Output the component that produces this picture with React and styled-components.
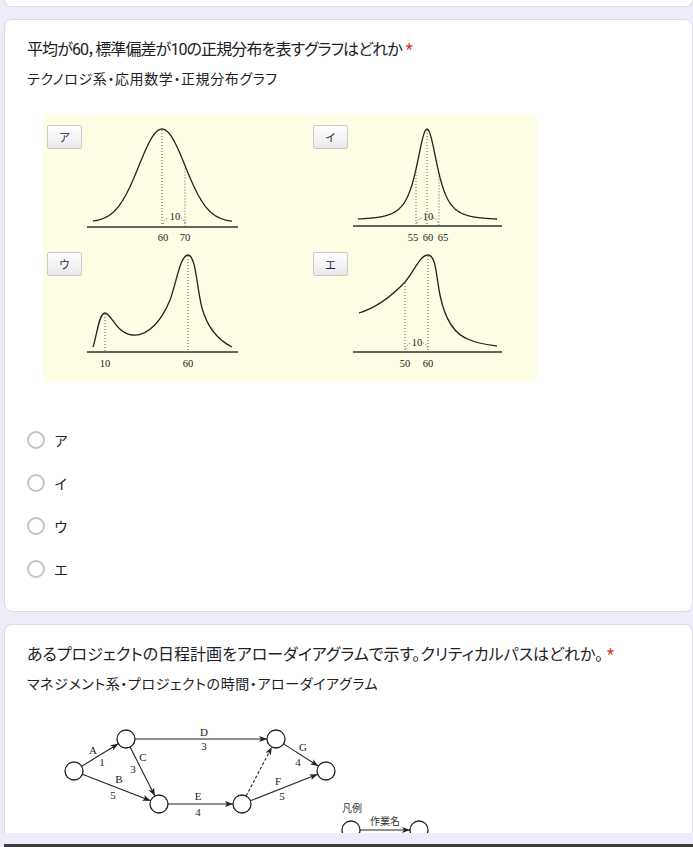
import React from 'react'
import styled, { createGlobalStyle } from 'styled-components'

const GlobalStyle = createGlobalStyle`
  html, body {
    margin: 0;
    padding: 0;
    background: #f0ebf8;
  }
  body {
    font-family: Roboto, "Noto Sans CJK JP", sans-serif;
    color: #202124;
  }
`

const Page = styled.div`
  height: 847px;
  overflow: hidden;
  display: flex;
  flex-direction: column;
  padding-left: 4px;
`

const Card = styled.section`
  flex: none;
  width: 689px;
  box-sizing: border-box;
  background: #fff;
  border: 1px solid #dadce0;
  border-radius: 8px;
  margin-top: ${({ $gap }) => $gap || 0}px;
  padding: 18px 22px 21px;
`

const StubCard = styled(Card)`
  height: 7px;
  padding: 0;
  border-top: none;
  border-radius: 0 0 8px 8px;
`

const ClippedCard = styled(Card)`
  height: 209px;
  padding-bottom: 0;
  border-bottom: none;
  border-radius: 8px 8px 0 0;
  overflow: hidden;
`

const Footer = styled.div`
  flex: none;
  height: 11px;
  border-bottom: 3px solid #3c3c3c;
`

const Title = styled.h2`
  margin: 0;
  font-size: 16px;
  line-height: 24px;
  font-weight: 400;
  font-feature-settings: 'palt';
  letter-spacing: ${({ $spacing }) => $spacing || 0}px;
`

const Required = styled.span`
  color: #d93025;
  margin-left: 4px;
`

const Description = styled.p`
  margin: 7px 0 0;
  font-size: 14px;
  line-height: 20px;
  font-feature-settings: 'palt';
  letter-spacing: 0.6px;
`

const Figure = styled.div`
  position: relative;
  margin: 26px 0 0 16px;
  width: ${({ $w }) => $w}px;
  height: ${({ $h }) => $h}px;
  background: ${({ $bg }) => $bg || 'transparent'};

  svg {
    display: block;
  }
`

const ChoiceTag = styled.span`
  position: absolute;
  left: ${({ $x }) => $x}px;
  top: ${({ $y }) => $y}px;
  width: 35px;
  height: 24px;
  box-sizing: border-box;
  display: flex;
  align-items: center;
  justify-content: center;
  border: 1px solid #cacaca;
  border-radius: 2px;
  background: linear-gradient(#ffffff, #e9e9e9);
  font-size: 11px;
  color: #1f2a44;
`

const Options = styled.ul`
  list-style: none;
  margin: 37px 0 0;
  padding: 0;
`

const Option = styled.li`
  height: 43px;
  display: flex;
  align-items: center;
  gap: 9px;
  font-size: 14px;
`

const Radio = styled.span`
  width: 18px;
  height: 18px;
  box-sizing: border-box;
  border: 2px solid #c4c4c4;
  border-radius: 50%;
`

const line = (from, to, fn) => {
  const pts = []
  for (let x = from; x <= to; x += 1) pts.push(`${x},${fn(x).toFixed(1)}`)
  return 'M' + pts.join(' L')
}

const gauss = (m, s, base, h) => x =>
  base - h * Math.exp(-((x - m) ** 2) / (2 * s * s))

const peaked = (m, g, base, h) => x =>
  base - h / Math.pow(1 + ((x - m) / g) ** 2, 1.5)

const curveA = gauss(162, 23, 222, 93)
const curveI = peaked(427, 16, 220, 91)

const ink = '#222'
const dot = { stroke: '#555', strokeWidth: 1, strokeDasharray: '1 2', fill: 'none' }
const serif = { fontFamily: '"Liberation Serif", serif', fontSize: 10.5, fill: '#222', textAnchor: 'middle' }

function Label({ x, y, children, size }) {
  return (
    <text x={x} y={y} style={{ ...serif, fontSize: size || 10.5 }}>
      {children}
    </text>
  )
}

function DistributionCharts() {
  return (
    <svg width="494" height="266" viewBox="43 115 494 266">
      <g fill="none" stroke={ink}>
        <path d={line(93, 232, curveA)} strokeWidth="1.3" />
        <path d={line(358, 497, curveI)} strokeWidth="1.3" />
        <path
          d="M93,347 C97,335 99,313 105,313 C111,313 116,333 132,335 C148,337 162,320 170,300 C176,285 180,255 188,255 C196,255 197,290 202,308 C207,326 218,340 232,347"
          strokeWidth="1.3"
        />
        <path
          d="M359,313 C375,308 390,298 405,282 C415,270 420,255 428,255 C436,255 436,275 440,295 C445,320 455,335 470,340 C480,344 490,345 497,346"
          strokeWidth="1.3"
        />
        <g stroke="#333" strokeWidth="1.6">
          <line x1="87" y1="227" x2="238" y2="227" />
          <line x1="353" y1="226" x2="502" y2="226" />
          <line x1="87" y1="352" x2="238" y2="352" />
          <line x1="353" y1="352" x2="502" y2="352" />
        </g>
      </g>

      <g style={dot}>
        <line x1="162" y1="130" x2="162" y2="227" />
        <line x1="185" y1={curveA(185)} x2="185" y2="227" />
        <path d="M163,224 Q164,219 168,218 M181,218 Q184,219 185,224" />

        <line x1="427" y1="130" x2="427" y2="226" />
        <line x1="416" y1={curveI(416)} x2="416" y2="226" />
        <line x1="439" y1={curveI(439)} x2="439" y2="226" />
        <path d="M417,223 Q418,219 422,218 M433,218 Q437,219 438,223" />

        <line x1="105" y1="314" x2="105" y2="352" />
        <line x1="188" y1="256" x2="188" y2="352" />

        <line x1="405" y1="283" x2="405" y2="352" />
        <line x1="428" y1="256" x2="428" y2="352" />
        <path d="M406,349 Q407,344 411,343 M423,343 Q427,344 428,349" />
      </g>

      <Label x="175" y="219.5">10</Label>
      <Label x="163" y="240.5">60</Label>
      <Label x="185" y="240.5">70</Label>

      <Label x="428" y="219.5">10</Label>
      <Label x="413" y="240.5">55</Label>
      <Label x="428" y="240.5">60</Label>
      <Label x="443" y="240.5">65</Label>

      <Label x="105" y="366.5">10</Label>
      <Label x="188" y="366.5">60</Label>

      <Label x="417" y="345.5">10</Label>
      <Label x="405" y="366.5">50</Label>
      <Label x="428" y="366.5">60</Label>
    </svg>
  )
}

const nodes = {
  n1: [74, 771],
  n2: [126, 739],
  n3: [159, 804],
  n4: [242, 804],
  n5: [276, 739],
  n6: [326, 771],
  l1: [351, 830],
  l2: [419, 830],
}

const edges = [
  ['n1', 'n2'],
  ['n2', 'n3'],
  ['n1', 'n3'],
  ['n2', 'n5'],
  ['n3', 'n4'],
  ['n4', 'n5', true],
  ['n4', 'n6'],
  ['n5', 'n6'],
  ['l1', 'l2'],
]

const edgeLabels = [
  ['A', 93, 754],
  ['1', 102, 766],
  ['C', 143, 761],
  ['3', 133, 773],
  ['B', 119, 783],
  ['5', 113, 799],
  ['D', 204, 736],
  ['3', 204, 750],
  ['E', 198, 800],
  ['4', 198, 816],
  ['F', 278, 785],
  ['5', 282, 800],
  ['G', 303, 751],
  ['4', 298, 766],
]

const R = 9

function ArrowDiagram() {
  return (
    <svg width="420" height="130" viewBox="43 720 420 130">
      <defs>
        <marker
          id="head"
          viewBox="0 0 8 8"
          refX="8"
          refY="4"
          markerWidth="8"
          markerHeight="8"
          markerUnits="userSpaceOnUse"
          orient="auto"
        >
          <path d="M0,1 L8,4 L0,7 L2,4 Z" fill={ink} />
        </marker>
      </defs>

      {edges.map(([a, b, dashed]) => {
        const [x1, y1] = nodes[a]
        const [x2, y2] = nodes[b]
        const len = Math.hypot(x2 - x1, y2 - y1)
        const ux = (x2 - x1) / len
        const uy = (y2 - y1) / len
        return (
          <line
            key={a + b}
            x1={x1 + ux * R}
            y1={y1 + uy * R}
            x2={x2 - ux * R}
            y2={y2 - uy * R}
            stroke={ink}
            strokeWidth="1.1"
            strokeDasharray={dashed ? '3 2' : undefined}
            markerEnd="url(#head)"
          />
        )
      })}

      {Object.entries(nodes).map(([k, [x, y]]) => (
        <circle key={k} cx={x} cy={y} r={R} fill="#fff" stroke={ink} strokeWidth="1.3" />
      ))}

      {edgeLabels.map(([t, x, y], i) => (
        <Label key={i} x={x} y={y} size={11}>
          {t}
        </Label>
      ))}

      <text x="342" y="812" fontSize="10" fill="#333" fontFamily='"Noto Sans CJK JP", sans-serif'>
        凡例
      </text>
      <text x="385" y="825" fontSize="10" fill="#333" textAnchor="middle" fontFamily='"Noto Sans CJK JP", sans-serif'>
        作業名
      </text>
    </svg>
  )
}

const tags = [
  ['ア', 4, 10],
  ['イ', 270, 10],
  ['ウ', 4, 137],
  ['エ', 270, 137],
]

const choices = ['ア', 'イ', 'ウ', 'エ']

export default function App() {
  return (
    <>
      <GlobalStyle />
      <Page>
        <StubCard />

        <Card $gap={12}>
          <Title $spacing={-0.9}>
            平均が60，標準偏差が10の正規分布を表すグラフはどれか
            <Required>*</Required>
          </Title>
          <Description>テクノロジ系・応用数学・正規分布グラフ</Description>

          <Figure $w={494} $h={266} $bg="#fefee6">
            <DistributionCharts />
            {tags.map(([t, x, y]) => (
              <ChoiceTag key={t} $x={x} $y={y}>
                {t}
              </ChoiceTag>
            ))}
          </Figure>

          <Options>
            {choices.map(c => (
              <Option key={c}>
                <Radio />
                {c}
              </Option>
            ))}
          </Options>
        </Card>

        <ClippedCard $gap={12}>
          <Title>
            あるプロジェクトの日程計画をアローダイアグラムで示す。クリティカルパスはどれか。
            <Required>*</Required>
          </Title>
          <Description>マネジメント系・プロジェクトの時間・アローダイアグラム</Description>

          <Figure $w={420} $h={130}>
            <ArrowDiagram />
          </Figure>
        </ClippedCard>

        <Footer />
      </Page>
    </>
  )
}
